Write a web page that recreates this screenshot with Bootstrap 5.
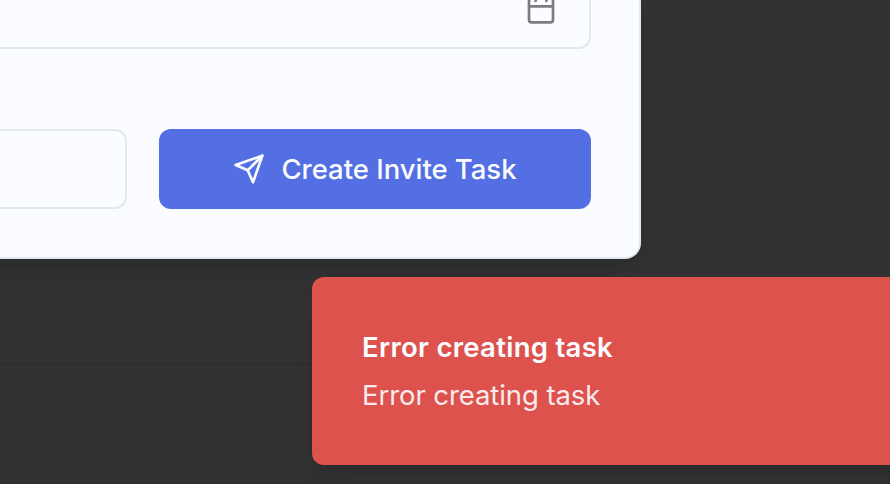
<!DOCTYPE html>
<html lang="en">
<head>
<meta charset="utf-8">
<meta name="viewport" content="width=device-width, initial-scale=1">
<title>Create Invite Task</title>
<link href="https://cdn.jsdelivr.net/npm/bootstrap@5.3.0/dist/css/bootstrap.min.css" rel="stylesheet">
<style>
  body { background: #323232; font-family: Inter, sans-serif; }
  .viewport-frame { width: 890px; height: 484px; font-size: 27.5px; }
  .page-rows { inset: 0; padding-top: 363px; }
  .page-row { height: 120px; border-top: 2px solid #2e2e2e; box-sizing: border-box; }
  .invite-dialog { width: 701px; height: 259px; margin-left: -60px; padding-left: 60px; background: #fafcff; border: 2px solid #e2e8f0; border-width: 0 2px 2px 0; border-radius: 0 0 16px 0; padding-right: 48px; box-shadow: 0 20px 30px -6px rgba(0,0,0,.1), 0 8px 12px -8px rgba(0,0,0,.1); }
  .date-field { height: 49px; border: 2px solid #e2e8f0; border-width: 0 2px 2px 0; border-radius: 0 0 12px 0; padding-right: 32px; color: #7b7c7e; }
  .date-field svg { margin-top: -7px; }
  .actions { margin-top: 80px; gap: 32px; }
  .cancel-btn { width: 127px; height: 80px; border: 2px solid #e2e8f0; border-left: 0; border-radius: 0 12px 12px 0; background: transparent; }
  .create-btn, .create-btn:hover { height: 80px; border: 0; border-radius: 12px; background: #546fe3; color: #fafcff; font-size: 27.5px; font-weight: 500; line-height: 42px; gap: 16px; padding: 0; }
  .create-btn span { letter-spacing: -.03px; }
  .error-toast { left: 312px; top: 277px; width: 640px; height: 188px; border-radius: 12px; background: #dd524c; color: #fafcff; padding: 50px; line-height: 40px; box-shadow: 0 20px 30px -6px rgba(0,0,0,.1), 0 8px 12px -8px rgba(0,0,0,.1); }
  .toast-title { font-weight: 600; margin-bottom: 8px; letter-spacing: .28px; }
  .toast-text { opacity: .9; letter-spacing: -.08px; }
</style>
</head>
<body class="overflow-hidden m-0">
<div class="viewport-frame position-relative overflow-hidden">
  <div class="page-rows position-absolute overflow-hidden">
    <div class="page-row"></div>
    <div class="page-row"></div>
  </div>
  <main class="invite-dialog position-relative">
    <div class="date-field d-flex justify-content-end align-items-start">
      <svg width="32" height="32" viewBox="0 0 24 24" fill="none" stroke="currentColor" stroke-width="2" stroke-linecap="round" stroke-linejoin="round" aria-hidden="true"><rect x="3" y="4" width="18" height="18" rx="2"/><path d="M16 2v4M8 2v4M3 10h18"/></svg>
    </div>
    <div class="actions d-flex">
      <button type="button" class="cancel-btn flex-shrink-0" aria-label="Cancel"></button>
      <button type="button" class="create-btn btn btn-primary flex-grow-1 d-flex align-items-center justify-content-center">
        <svg width="32" height="32" viewBox="0 0 24 24" fill="none" stroke="currentColor" stroke-width="2" stroke-linecap="round" stroke-linejoin="round" aria-hidden="true"><path d="m22 2-7 20-4-9-9-4Z"/><path d="M22 2 11 13"/></svg>
        <span>Create Invite Task</span>
      </button>
    </div>
  </main>
  <div class="error-toast position-absolute" role="alert">
    <div class="toast-title">Error creating task</div>
    <div class="toast-text">Error creating task</div>
  </div>
</div>
<script src="https://cdn.jsdelivr.net/npm/bootstrap@5.3.0/dist/js/bootstrap.bundle.min.js"></script>
</body>
</html>
